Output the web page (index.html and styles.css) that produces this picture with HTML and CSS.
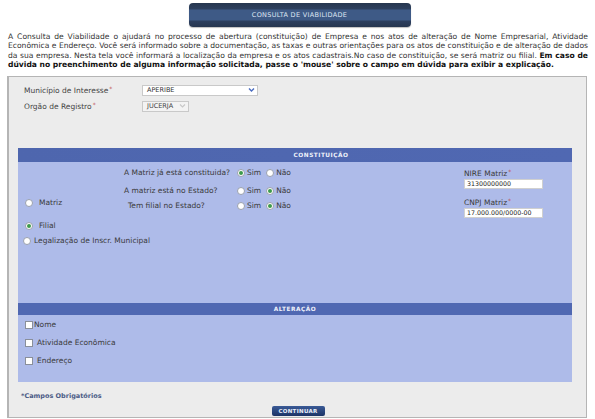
FILE: index.html
```html
<!DOCTYPE html>
<html lang="pt">
<head>
<meta charset="utf-8">
<title>Consulta de Viabilidade</title>
<link rel="stylesheet" href="styles.css">
</head>
<body>
<div class="page">
  <div class="title-wrap"><div class="title-bar">CONSULTA DE VIABILIDADE</div></div>
  <div class="intro">
    <span class="line">A Consulta de Viabilidade o ajudará no processo de abertura (constituição) de Empresa e nos atos de alteração de Nome Empresarial, Atividade</span>
    <span class="line">Econômica e Endereço. Você será informado sobre a documentação, as taxas e outras orientações para os atos de constituição e de alteração de dados</span>
    <span class="line">da sua empresa. Nesta tela você informará a localização da empresa e os atos cadastrais.No caso de constituição, se será matriz ou filial. <b>Em caso de</b></span>
    <span class="line last"><b>dúvida no preenchimento de alguma informação solicitada, passe o 'mouse' sobre o campo em dúvida para exibir a explicação.</b></span>
  </div>

  <div class="panel">
    <div class="fields">
      <div class="field">
        <span class="flabel">Município de Interesse<span class="ast">*</span></span>
        <div class="select wide"><span>APERIBE</span><span class="arrow"><svg width="7" height="6" viewBox="0 0 7 6"><path d="M1 1.5 L3.5 4 L6 1.5" fill="none" stroke="#4a6cc0" stroke-width="1.4"/></svg></span></div>
      </div>
      <div class="field">
        <span class="flabel">Orgão de Registro<span class="ast">*</span></span>
        <div class="select small disabled"><span>JUCERJA</span><span class="arrow"><svg width="7" height="6" viewBox="0 0 7 6"><path d="M1 1.5 L3.5 4 L6 1.5" fill="none" stroke="#c8c8c8" stroke-width="1.2"/></svg></span></div>
      </div>
    </div>

    <div class="box">
      <div class="bar bar-const">CONSTITUIÇÃO</div>
      <div class="const">
        <div class="types">
          <label class="opt"><span class="radio"></span>Matriz</label>
          <label class="opt filial"><span class="radio on"></span>Filial</label>
          <label class="opt legal"><span class="radio"></span>Legalização de Inscr. Municipal</label>
        </div>
        <div class="questions">
          <div class="q"><span class="qlabel">A Matriz já está constituida?</span><span class="radio on"></span><span class="rl">Sim</span><span class="radio"></span><span class="rl">Não</span></div>
          <div class="q"><span class="qlabel">A matriz está no Estado?</span><span class="radio"></span><span class="rl">Sim</span><span class="radio on"></span><span class="rl">Não</span></div>
          <div class="q"><span class="qlabel indent">Tem filial no Estado?</span><span class="radio"></span><span class="rl">Sim</span><span class="radio on"></span><span class="rl">Não</span></div>
        </div>
        <div class="matriz">
          <span class="mlabel">NIRE Matriz<span class="ast">*</span></span>
          <div class="input">31300000000</div>
          <span class="mlabel second">CNPJ Matriz<span class="ast">*</span></span>
          <div class="input">17.000.000/0000-00</div>
        </div>
      </div>
      <div class="bar">ALTERAÇÃO</div>
      <div class="alter">
        <label class="chk tight"><span class="box-chk"></span>Nome</label>
        <label class="chk"><span class="box-chk"></span>Atividade Econômica</label>
        <label class="chk"><span class="box-chk"></span>Endereço</label>
      </div>
    </div>

    <div class="req">*Campos Obrigatórios</div>
    <div class="actions"><span class="btn">CONTINUAR</span></div>
  </div>
</div>
</body>
</html>
```
FILE: styles.css
```css
* { box-sizing: border-box; }
html, body { margin: 0; padding: 0; background: #fff; }
body {
  font-family: "DejaVu Sans", Verdana, sans-serif;
  font-size: 8px;
  color: #333;
}
.page { width: 595px; }

.title-wrap { padding-top: 3px; display: flex; justify-content: center; }
.title-bar {
  width: 222px;
  height: 24px;
  margin-left: 4px;
  border-radius: 4px;
  background: linear-gradient(#26364f 0, #2c3f5e 6px, #3e5a86 7px, #3e5a86 17px, #2c3f5e 18px, #26364f 100%);
  color: #dfe6f3;
  font-size: 6.5px;
  letter-spacing: 0.3px;
  display: flex;
  align-items: center;
  justify-content: center;
  box-shadow: 0 1px 1px rgba(0,0,0,0.25);
}

.intro {
  margin: 5px 7px 0 8px;
  line-height: 9.4px;
  font-size: 7.6px;
  color: #333;
}
.intro .line { display: block; text-align: justify; text-align-last: justify; white-space: nowrap; }
.intro .line.last { text-align-last: left; }
.intro b { color: #111; }

.panel {
  margin: 6px 8px 0 7px;
  border: 1px solid #b5b5b5;
  border-left-width: 2px;
  background: #ececec;
  padding: 8px 14px 2px 9px;
  height: 342px;
}

.fields { display: flex; flex-direction: column; gap: 5px; padding-left: 6px; }
.field { display: flex; align-items: center; height: 11px; }
.flabel { width: 118px; color: #444; font-size: 7.5px; }
.ast { color: #c05050; font-size: 6px; vertical-align: 2px; margin-left: 1px; }
.select {
  height: 11px;
  border: 1px solid #c9c9c9;
  background: #fff;
  display: flex;
  align-items: center;
  justify-content: space-between;
  padding: 0 2px 0 4px;
  font-size: 6.5px;
  color: #333;
}
.select.wide { width: 116px; }
.select.small { width: 47px; background: #f3f3f3; color: #444; }
.arrow { display: flex; align-items: center; }

.box { margin-top: 36px; background: #aebbe9; }
.bar {
  height: 12px;
  background: #5068b2;
  color: #f0f3fb;
  font-size: 5.8px;
  font-weight: bold;
  letter-spacing: 0.5px;
  display: flex;
  align-items: center;
  justify-content: center;
}
.bar-const {
  height: 14px;
  background: linear-gradient(90deg, #4e66ae 0, #5068b2 100%);
  padding-left: 52px;
}

.const { display: flex; height: 141px; }
.types { width: 106px; flex: none; padding: 36px 0 0 7px; display: flex; flex-direction: column; }
.opt { display: flex; align-items: center; height: 10px; color: #3a3a3a; font-size: 7.5px; white-space: nowrap; }
.opt .radio { margin-right: 6px; }
.opt.filial { margin-top: 13px; }
.opt.legal { margin-top: 5px; margin-left: -2px; }
.opt.legal .radio { margin-right: 3px; }

.radio {
  width: 8px; height: 8px;
  border-radius: 50%;
  border: 1px solid #9aa0ad;
  background: #fff;
  display: inline-flex;
  align-items: center;
  justify-content: center;
  flex: none;
}
.radio.on::after {
  content: "";
  width: 4px; height: 4px;
  border-radius: 50%;
  background: #3c9a4a;
}

.questions { width: 340px; flex: none; padding-top: 6px; display: flex; flex-direction: column; }
.q { display: flex; align-items: center; height: 10px; color: #3a3a3a; font-size: 7.5px; white-space: nowrap; }
.q + .q { margin-top: 8px; }
.q:nth-child(3) { margin-top: 5px; }
.qlabel { width: 113px; }
.qlabel.indent { padding-left: 4px; }
.q .radio { margin-right: 2px; }
.rl { margin-right: 5px; }

.matriz { padding-top: 5px; display: flex; flex-direction: column; }
.mlabel { color: #3a3a3a; font-size: 7.5px; line-height: 10px; }
.mlabel.second { margin-top: 7px; }
.input {
  width: 79px; height: 10px;
  background: #fff;
  border: 1px solid #d0d0d0;
  font-size: 6.3px;
  line-height: 8px;
  padding-left: 2px;
  color: #222;
  white-space: nowrap;
  overflow: hidden;
}

.alter { height: 67px; padding: 5px 0 0 7px; display: flex; flex-direction: column; }
.chk { display: flex; align-items: center; height: 10px; color: #3a3a3a; font-size: 7.5px; }
.chk + .chk { margin-top: 8px; }
.box-chk {
  width: 8px; height: 8px;
  border: 1px solid #8a8f9a;
  background: #fff;
  margin-right: 4px;
  flex: none;
}
.chk.tight .box-chk { margin-right: 1px; }

.req {
  margin-top: 10px;
  padding-left: 3px;
  color: #4b5b86;
  font-size: 6.5px;
  font-weight: bold;
}
.actions { display: flex; justify-content: center; margin-top: 6px; }
.btn {
  width: 53px; height: 10px;
  border-radius: 2px;
  background: linear-gradient(#3a5a96, #1c3366);
  color: #e8eefa;
  font-size: 5.5px;
  font-weight: bold;
  letter-spacing: 0.3px;
  display: flex;
  align-items: center;
  justify-content: center;
  margin-left: 6px;
}
```
